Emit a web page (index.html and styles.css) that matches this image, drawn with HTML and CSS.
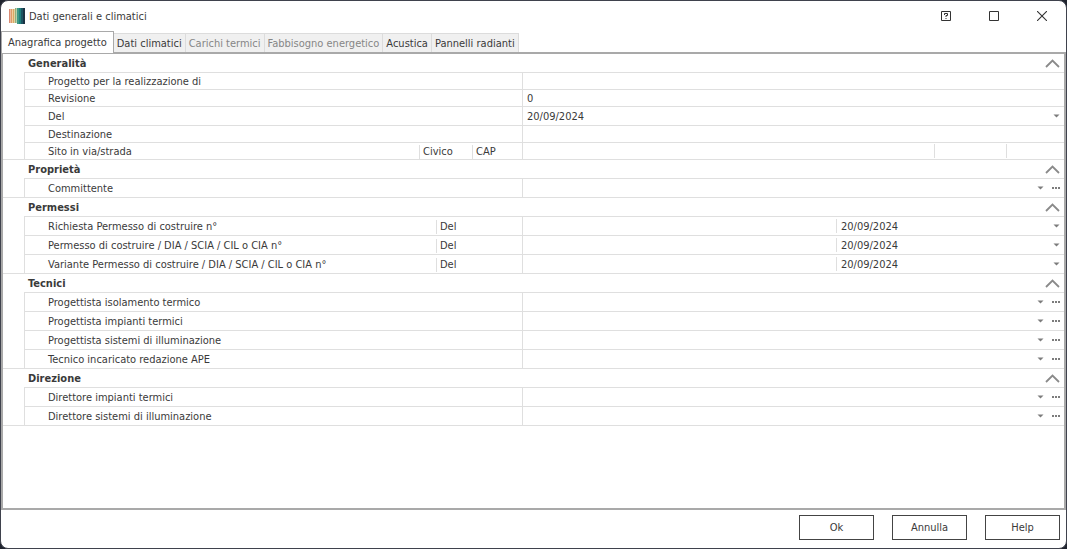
FILE: index.html
```html
<!DOCTYPE html>
<html lang="it">
<head>
<meta charset="UTF-8" />
<meta name="viewport" content="width=device-width, initial-scale=1" />
<title>Dati generali e climatici</title>
<link rel="stylesheet" href="styles.css">
</head>
<body>

<svg class="sprites" aria-hidden="true">
  <symbol id="chevron" viewBox="0 0 15 9"><path d="M1 8 L7.5 1.5 L14 8" fill="none" stroke="#8a8a8a" stroke-width="1.8"/></symbol>
  <symbol id="arrow" viewBox="0 0 7 4"><path d="M0.5 0.5 H6.5 L3.5 3.5 Z" fill="#7c7c7c"/></symbol>
  <symbol id="dots" viewBox="0 0 8 2"><path d="M0 0h2v2H0z M3 0h2v2H3z M6 0h2v2H6z" fill="#7c7c7c"/></symbol>
</svg>

<div class="window">

  <!-- barra del titolo -->
  <header class="titlebar">
    <svg class="app-icon" viewBox="0 0 16 16" aria-hidden="true">
      <path fill="#d98a74" d="M0 1h1v14H0z"/>
      <path fill="#eab9a0" d="M1 1h1v14H1z"/>
      <path fill="#dd9c68" d="M2 1h1v14H2z"/>
      <path fill="#efcf9f" d="M3 1h1v14H3z"/>
      <path fill="#d9a766" d="M4 1h1v14H4z"/>
      <path fill="#e3d3a0" d="M5 1h1v14H5z"/>
      <path fill="#8fae7c" d="M6 0h1v15H6z"/>
      <path fill="#b9cfae" d="M7 0h1v15H7z"/>
      <path fill="#3f9a86" d="M8 0h2v16H8z"/>
      <path fill="#1f7f7d" d="M10 0h2v16h-2z"/>
      <path fill="#1d5563" d="M12 0h2v16h-2z"/>
      <path fill="#1c3344" d="M14 0h2v16h-2z"/>
    </svg>
    <h1>Dati generali e climatici</h1>
    <div class="win-buttons">
      <button type="button" aria-label="Guida">
        <svg width="10" height="10" viewBox="0 0 10 10"><path d="M.5 .5h9v9h-9z M3.5 4V2.5h3V4.5H5V6 M5 7v1" fill="none" stroke="#333" stroke-width="1"/></svg>
      </button>
      <button type="button" aria-label="Ingrandisci">
        <svg width="10" height="10" viewBox="0 0 10 10"><path d="M.5 .5h9v9h-9z" fill="none" stroke="#333"/></svg>
      </button>
      <button type="button" aria-label="Chiudi">
        <svg width="10" height="10" viewBox="0 0 10 10"><path d="M0 0L10 10M10 0L0 10" fill="none" stroke="#333" stroke-width="1.1"/></svg>
      </button>
    </div>
  </header>

  <!-- schede -->
  <nav class="tabs" role="tablist">
    <button type="button" role="tab" class="tab active" aria-selected="true">Anagrafica progetto</button>
    <button type="button" role="tab" class="tab">Dati climatici</button>
    <button type="button" role="tab" class="tab" disabled>Carichi termici</button>
    <button type="button" role="tab" class="tab" disabled>Fabbisogno energetico</button>
    <button type="button" role="tab" class="tab">Acustica</button>
    <button type="button" role="tab" class="tab">Pannelli radianti</button>
  </nav>

  <main class="panel">

    <section class="group compact">
      <div class="group-head">
        <h2>Generalità</h2>
        <button type="button" aria-label="Comprimi Generalità"><svg class="chevron"><use href="#chevron"/></svg></button>
      </div>
      <div class="row">
        <div class="names"><label for="progetto">Progetto per la realizzazione di</label></div>
        <div class="values"><input type="text" id="progetto"></div>
      </div>
      <div class="row">
        <div class="names"><label for="revisione">Revisione</label></div>
        <div class="values"><input type="text" id="revisione" value="0"></div>
      </div>
      <div class="row tall">
        <div class="names"><label for="del">Del</label></div>
        <div class="values"><input type="text" id="del" value="20/09/2024"><button type="button" aria-label="Apri calendario"><svg class="arrow"><use href="#arrow"/></svg></button></div>
      </div>
      <div class="row">
        <div class="names"><label for="destinazione">Destinazione</label></div>
        <div class="values"><input type="text" id="destinazione"></div>
      </div>
      <div class="row">
        <div class="names">
          <label for="via">Sito in via/strada</label>
          <label for="civico" class="sub civico">Civico</label>
          <label for="cap" class="sub cap">CAP</label>
        </div>
        <div class="values">
          <input type="text" id="via">
          <input type="text" id="civico" class="sub v-civico">
          <input type="text" id="cap" class="sub v-cap">
        </div>
      </div>
    </section>

    <section class="group">
      <div class="group-head">
        <h2>Proprietà</h2>
        <button type="button" aria-label="Comprimi Proprietà"><svg class="chevron"><use href="#chevron"/></svg></button>
      </div>
      <div class="row">
        <div class="names"><label for="committente">Committente</label></div>
        <div class="values"><input type="text" id="committente"><button type="button" aria-label="Apri elenco"><svg class="arrow"><use href="#arrow"/></svg></button><button type="button" aria-label="Sfoglia"><svg class="dots"><use href="#dots"/></svg></button></div>
      </div>
    </section>

    <section class="group">
      <div class="group-head">
        <h2>Permessi</h2>
        <button type="button" aria-label="Comprimi Permessi"><svg class="chevron"><use href="#chevron"/></svg></button>
      </div>
      <div class="row">
        <div class="names"><label for="richiesta">Richiesta Permesso di costruire n°</label><label for="richiesta-del" class="sub del">Del</label></div>
        <div class="values"><input type="text" id="richiesta"><input type="text" id="richiesta-del" class="sub v-del" value="20/09/2024"><button type="button" aria-label="Apri calendario"><svg class="arrow"><use href="#arrow"/></svg></button></div>
      </div>
      <div class="row">
        <div class="names"><label for="permesso">Permesso di costruire / DIA / SCIA / CIL o CIA n°</label><label for="permesso-del" class="sub del">Del</label></div>
        <div class="values"><input type="text" id="permesso"><input type="text" id="permesso-del" class="sub v-del" value="20/09/2024"><button type="button" aria-label="Apri calendario"><svg class="arrow"><use href="#arrow"/></svg></button></div>
      </div>
      <div class="row">
        <div class="names"><label for="variante">Variante Permesso di costruire / DIA / SCIA / CIL o CIA n°</label><label for="variante-del" class="sub del">Del</label></div>
        <div class="values"><input type="text" id="variante"><input type="text" id="variante-del" class="sub v-del" value="20/09/2024"><button type="button" aria-label="Apri calendario"><svg class="arrow"><use href="#arrow"/></svg></button></div>
      </div>
    </section>

    <section class="group">
      <div class="group-head">
        <h2>Tecnici</h2>
        <button type="button" aria-label="Comprimi Tecnici"><svg class="chevron"><use href="#chevron"/></svg></button>
      </div>
      <div class="row">
        <div class="names"><label for="isolamento">Progettista isolamento termico</label></div>
        <div class="values"><input type="text" id="isolamento"><button type="button" aria-label="Apri elenco"><svg class="arrow"><use href="#arrow"/></svg></button><button type="button" aria-label="Sfoglia"><svg class="dots"><use href="#dots"/></svg></button></div>
      </div>
      <div class="row">
        <div class="names"><label for="impianti">Progettista impianti termici</label></div>
        <div class="values"><input type="text" id="impianti"><button type="button" aria-label="Apri elenco"><svg class="arrow"><use href="#arrow"/></svg></button><button type="button" aria-label="Sfoglia"><svg class="dots"><use href="#dots"/></svg></button></div>
      </div>
      <div class="row">
        <div class="names"><label for="illuminazione">Progettista sistemi di illuminazione</label></div>
        <div class="values"><input type="text" id="illuminazione"><button type="button" aria-label="Apri elenco"><svg class="arrow"><use href="#arrow"/></svg></button><button type="button" aria-label="Sfoglia"><svg class="dots"><use href="#dots"/></svg></button></div>
      </div>
      <div class="row">
        <div class="names"><label for="ape">Tecnico incaricato redazione APE</label></div>
        <div class="values"><input type="text" id="ape"><button type="button" aria-label="Apri elenco"><svg class="arrow"><use href="#arrow"/></svg></button><button type="button" aria-label="Sfoglia"><svg class="dots"><use href="#dots"/></svg></button></div>
      </div>
    </section>

    <section class="group">
      <div class="group-head">
        <h2>Direzione</h2>
        <button type="button" aria-label="Comprimi Direzione"><svg class="chevron"><use href="#chevron"/></svg></button>
      </div>
      <div class="row">
        <div class="names"><label for="dir-impianti">Direttore impianti termici</label></div>
        <div class="values"><input type="text" id="dir-impianti"><button type="button" aria-label="Apri elenco"><svg class="arrow"><use href="#arrow"/></svg></button><button type="button" aria-label="Sfoglia"><svg class="dots"><use href="#dots"/></svg></button></div>
      </div>
      <div class="row">
        <div class="names"><label for="dir-illuminazione">Direttore sistemi di illuminazione</label></div>
        <div class="values"><input type="text" id="dir-illuminazione"><button type="button" aria-label="Apri elenco"><svg class="arrow"><use href="#arrow"/></svg></button><button type="button" aria-label="Sfoglia"><svg class="dots"><use href="#dots"/></svg></button></div>
      </div>
    </section>

  </main>

  <footer>
    <button type="button">Ok</button>
    <button type="button">Annulla</button>
    <button type="button">Help</button>
  </footer>

</div>

</body>
</html>
```
FILE: styles.css
```css
/* Reset */
* {
  margin: 0;
  padding: 0;
  box-sizing: border-box;
}

body {
  background: #20242f;
  color: #3a3a3a;
  font-family: "DejaVu Sans Condensed", Tahoma, sans-serif;
  font-size: 11px;
  line-height: 16px;
}

button,
input {
  font: inherit;
  color: inherit;
  background: none;
  border: none;
  outline: none;
}

.sprites {
  display: none;
}

/* finestra */
.window {
  min-height: 100vh;
  display: flex;
  flex-direction: column;
  background: #fff;
  border: 1px solid #3f424d;
  border-radius: 8px;
}

.titlebar {
  display: flex;
  align-items: center;
  height: 30px;
  padding-left: 8px;
}

.app-icon {
  width: 16px;
  height: 16px;
  margin-right: 4px;
}

.titlebar h1 {
  flex: 1;
  padding-top: 2px;
  font-size: 11px;
  font-weight: normal;
}

.win-buttons {
  display: flex;
}

.win-buttons button {
  display: flex;
  align-items: center;
  justify-content: center;
  width: 48px;
  height: 30px;
}

/* schede */
.tabs {
  display: flex;
  align-items: flex-end;
}

.tab {
  height: 19px;
  padding: 1px 3px 0;
  background: #f0f0f0;
  border: 1px solid #dcdcdc;
  border-bottom: none;
  margin-right: -1px;
  white-space: nowrap;
}

.tab:disabled {
  color: #868686;
}

.tab.active {
  position: relative; /* copre il bordo del pannello */
  height: 22px;
  padding: 0 6px;
  margin-bottom: -1px;
  background: #fff;
  border-color: #a9a9a9;
}

/* pannello */
.panel {
  flex: 1;
  border: 2px solid #a9a9a9;
}

.group {
  border-bottom: 1px solid #dfdfdf;
}

.group-head {
  display: flex;
  align-items: center;
  justify-content: space-between;
  height: 18px;
  padding: 0 4px 0 25px;
}

.group-head h2 {
  padding-top: 2px;
  font-size: 11px;
  font-weight: bold;
}

.group-head button {
  display: flex;
}

.chevron {
  width: 15px;
  height: 9px;
}

.row {
  display: flex;
  height: 19px;
  margin-left: 21px;
  border-top: 1px solid #dfdfdf;
  border-left: 1px solid #dfdfdf;
}

.compact .row {
  height: 17px;
}

.compact .row.tall {
  height: 19px;
}

.names {
  display: flex;
  align-items: center;
  width: 497px;
  padding: 2px 0 0 23px;
}

.names label:first-child {
  flex: 1;
  white-space: nowrap;
}

.values {
  flex: 1;
  display: flex;
  align-items: center;
  border-left: 1px solid #dfdfdf;
}

.values input {
  flex: 1;
  min-width: 0;
  height: 16px;
  padding: 2px 0 0 4px;
}

.values button {
  display: flex;
  align-items: center;
  justify-content: center;
  width: 16px;
  height: 16px;
}

.names .sub,
.values .sub {
  height: 14px;
  line-height: 14px;
  border-left: 1px solid #dfdfdf;
}

.names .sub {
  padding-left: 3px;
}

.civico {
  width: 53px;
}

.cap {
  width: 50px;
}

.del {
  width: 86px;
}

.values .v-civico {
  flex: none;
  width: 72px;
}

.values .v-cap {
  flex: none;
  width: 58px;
}

.values .v-del {
  flex: none;
  width: 212px;
}

.arrow {
  width: 7px;
  height: 4px;
}

.dots {
  width: 8px;
  height: 2px;
}

/* pulsanti in basso */
footer {
  display: flex;
  justify-content: flex-end;
  gap: 18px;
  padding: 5px 6px 8px;
}

footer button {
  width: 75px;
  height: 25px;
  border: 1px solid #444;
}
```
